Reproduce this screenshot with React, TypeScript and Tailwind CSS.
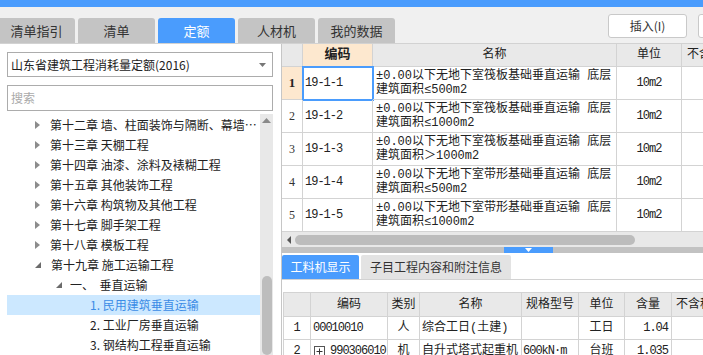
import React from 'react';

const topTabs = ['清单指引', '清单', '定额', '人材机', '我的数据'];

const tree = [
  { level: 0, open: false, text: '第十二章 墙、柱面装饰与隔断、幕墙工程' },
  { level: 0, open: false, text: '第十三章 天棚工程' },
  { level: 0, open: false, text: '第十四章 油漆、涂料及裱糊工程' },
  { level: 0, open: false, text: '第十五章 其他装饰工程' },
  { level: 0, open: false, text: '第十六章 构筑物及其他工程' },
  { level: 0, open: false, text: '第十七章 脚手架工程' },
  { level: 0, open: false, text: '第十八章 模板工程' },
  { level: 0, open: true, text: '第十九章 施工运输工程' },
  { level: 1, open: true, text: '一、  垂直运输' },
  { level: 2, text: '1. 民用建筑垂直运输', selected: true },
  { level: 2, text: '2. 工业厂房垂直运输' },
  { level: 2, text: '3. 钢结构工程垂直运输' },
];

const quotas = [
  { code: '19-1-1', name: ['±0.00以下无地下室筏板基础垂直运输 底层', '建筑面积≤500m2'], unit: '10m2' },
  { code: '19-1-2', name: ['±0.00以下无地下室筏板基础垂直运输 底层', '建筑面积≤1000m2'], unit: '10m2' },
  { code: '19-1-3', name: ['±0.00以下无地下室筏板基础垂直运输 底层', '建筑面积＞1000m2'], unit: '10m2' },
  { code: '19-1-4', name: ['±0.00以下无地下室带形基础垂直运输 底层', '建筑面积≤500m2'], unit: '10m2' },
  { code: '19-1-5', name: ['±0.00以下无地下室带形基础垂直运输 底层', '建筑面积≤1000m2'], unit: '10m2' },
];

// bottom grid column widths (incl. right border)
const resCols = ['w-[27px]', 'w-[77px]', 'w-[32px]', 'w-[102px]', 'w-[57px]', 'w-[46px]', 'w-[47px]', 'w-[80px]'];
const resHead = ['', '编码', '类别', '名称', '规格型号', '单位', '含量', '不含税单价'];

const cell = 'shrink-0 border-r border-b border-[#d3d3d3] flex items-center overflow-hidden whitespace-nowrap';
const grid = "font-['Liberation_Mono','Noto_Sans_CJK_SC',monospace]";
const num = 'tracking-[-1px]';

function TreeArrow({ open }: { open?: boolean }) {
  return open ? (
    <svg width="6" height="6" viewBox="0 0 6 6" className="shrink-0">
      <polygon points="6,0 6,6 0,6" fill="#6b6b6b" />
    </svg>
  ) : (
    <svg width="5" height="8" viewBox="0 0 5 8" className="shrink-0">
      <polygon points="0,0 5,4 0,8" fill="#8c8c8c" />
    </svg>
  );
}

export default function App() {
  return (
    <div className="w-[703px] h-[355px] overflow-hidden bg-[#f0f0f0] flex flex-col text-[12px] text-[#222] font-['Noto_Sans_CJK_SC',sans-serif]">
      <div className="h-[7px] shrink-0 bg-[#4a9cfd]" />

      {/* toolbar + tabs */}
      <div className="h-[37px] shrink-0 flex border-b border-[#d2d2d2]">
        <div className="flex items-end gap-[3px] ml-[-2px]">
          {topTabs.map((t) => (
            <div
              key={t}
              className={`w-[77px] h-[25px] rounded-t-[3px] flex items-center justify-center text-[13px] ${
                t === '定额' ? 'bg-[#4a9cfd] text-white' : 'bg-[#c4c4c4] text-[#333]'
              }`}
            >
              {t}
            </div>
          ))}
        </div>
        <div className="ml-[213px] mt-[7px] flex gap-[11px] shrink-0">
          <button className="w-[79px] h-[24px] shrink-0 bg-white border border-[#c9c9c9] rounded-[3px] text-[12px] text-[#333]">
            插入(I)
          </button>
          <button className="w-[79px] h-[24px] shrink-0 bg-white border border-[#c9c9c9] rounded-[3px] text-[12px] text-[#333]">
            替换(R)
          </button>
        </div>
      </div>

      <div className="flex flex-1 min-h-0">
        {/* left panel */}
        <div className="w-[281px] shrink-0 bg-white flex flex-col pl-[7px] pt-[8px]">
          <div className="w-[266px] h-[25px] border border-[#acacac] flex items-center justify-between pl-[3px] pr-[6px]">
            <span>山东省建筑工程消耗量定额(2016)</span>
            <svg width="7" height="4" viewBox="0 0 7 4">
              <polygon points="0,0 7,0 3.5,4" fill="#777" />
            </svg>
          </div>
          <div className="mt-[8px] w-[266px] h-[26px] border border-[#acacac] flex items-center pl-[3px] text-[#aaa]">
            搜索
          </div>
          <div className="mt-[3px] flex flex-1 min-h-0">
            <div className="w-[253px] pt-[1px]">
              {tree.map((n) => (
                <div
                  key={n.text}
                  className={`h-[20px] flex items-center ${n.selected ? 'bg-[#cce8ff] text-[#3b8ce6]' : 'text-[#222]'}`}
                >
                  {n.level === 0 && (
                    <>
                      <span className="w-[28px] shrink-0" />
                      <TreeArrow open={n.open} />
                      <span className="w-[10px] shrink-0" />
                    </>
                  )}
                  {n.level === 1 && (
                    <>
                      <span className="w-[49px] shrink-0" />
                      <TreeArrow open />
                      <span className="w-[8px] shrink-0" />
                    </>
                  )}
                  {n.level === 2 && <span className="w-[83px] shrink-0" />}
                  <span className="truncate pr-[3px] whitespace-pre">{n.text}</span>
                </div>
              ))}
            </div>
            <div className="w-[13px] bg-[#e8e8e8] flex flex-col items-center">
              <svg width="9" height="5" viewBox="0 0 9 5" className="mt-[4px]">
                <polygon points="0,5 9,5 4.5,0" fill="#8a8a8a" />
              </svg>
              <div className="mt-[153px] w-[10px] flex-1 rounded-full bg-[#bdbdbd]" />
            </div>
          </div>
        </div>

        <div className="w-px shrink-0 bg-[#c6c6c6]" />

        {/* right panel */}
        <div className="w-[421px] shrink-0 flex flex-col bg-white overflow-hidden">
          <div className={`${grid} flex flex-col`}>
            <div className="flex h-[23px] bg-[#e9e9e9]">
              <div className={`${cell} w-[21px]`} />
              <div className={`${cell} w-[70px] justify-center bg-[#fde8cf] font-bold text-[13px]`}>编码</div>
              <div className={`${cell} w-[244px] justify-center`}>名称</div>
              <div className={`${cell} w-[65px] justify-center`}>单位</div>
              <div className={`${cell} w-[90px] pl-[5px]`}>不含税单价</div>
            </div>
            {quotas.map((q, i) => (
              <div key={q.code} className="flex h-[33px]">
                <div
                  className={`${cell} w-[21px] justify-center font-['Liberation_Serif',serif] ${
                    i === 0 ? 'bg-[#fde8cf] font-bold text-[13px]' : 'text-[#333]'
                  }`}
                >
                  {i + 1}
                </div>
                <div
                  className={`${cell} ${num} w-[70px] pl-[2px] ${
                    i === 0 ? 'outline-2 outline-[#4a9cfd] -outline-offset-1' : ''
                  }`}
                >
                  {q.code}
                </div>
                <div className={`${cell} w-[244px] pl-[3px] flex-col items-start justify-center leading-[14px]`}>
                  <span>{q.name[0]}</span>
                  <span>{q.name[1]}</span>
                </div>
                <div className={`${cell} ${num} w-[65px] justify-center`}>{q.unit}</div>
                <div className={`${cell} w-[90px]`} />
              </div>
            ))}
          </div>

          {/* horizontal scrollbar */}
          <div className="h-[15px] shrink-0 bg-[#e8e8e8] flex items-center">
            <svg width="4" height="8" viewBox="0 0 4 8" className="ml-[5px]">
              <polygon points="4,0 4,8 0,4" fill="#555" />
            </svg>
            <div className="ml-[4px] w-[340px] h-[10px] rounded-full bg-[#bcbcbc]" />
          </div>

          {/* splitter */}
          <div className="h-[6px] shrink-0 bg-[#c2c2c2] flex">
            <div className="ml-[222px] w-[49px] h-[6px] bg-[#4a9cfd] flex justify-center">
              <svg width="7" height="4" viewBox="0 0 7 4" className="mt-[1px]">
                <polygon points="0,0 7,0 3.5,4" fill="#fff" />
              </svg>
            </div>
          </div>

          {/* bottom tabs */}
          <div className="h-[27px] shrink-0 pt-[2px] flex gap-[2px] border-b border-[#d2d2d2]">
            <div className="w-[77px] h-[24px] rounded-t-[2px] bg-[#4a9cfd] text-white flex items-center justify-center">
              工料机显示
            </div>
            <div className="w-[150px] h-[24px] rounded-t-[2px] bg-[#e3e3e3] text-[#333] flex items-center justify-center">
              子目工程内容和附注信息
            </div>
          </div>

          <div className="h-[12px] shrink-0" />

          {/* resource grid */}
          <div className={`${grid} ml-px flex flex-col border-l border-t border-[#d3d3d3]`}>
            <div className="flex h-[24px] bg-[#e9e9e9]">
              {resHead.map((h, i) => (
                <div key={i} className={`${cell} ${resCols[i]} ${i === 7 ? 'pl-[4px]' : 'justify-center'}`}>
                  {h}
                </div>
              ))}
            </div>
            <div className="flex h-[23px]">
              <div className={`${cell} ${resCols[0]} justify-center`}>1</div>
              <div className={`${cell} ${num} ${resCols[1]} pl-[2px]`}>00010010</div>
              <div className={`${cell} ${resCols[2]} justify-center`}>人</div>
              <div className={`${cell} ${resCols[3]} pl-[2px]`}>综合工日(土建)</div>
              <div className={`${cell} ${resCols[4]}`} />
              <div className={`${cell} ${resCols[5]} justify-center`}>工日</div>
              <div className={`${cell} ${num} ${resCols[6]} justify-end pr-[3px]`}>1.04</div>
              <div className={`${cell} ${resCols[7]}`} />
            </div>
            <div className="flex h-[23px]">
              <div className={`${cell} ${resCols[0]} justify-center`}>2</div>
              <div className={`${cell} ${num} ${resCols[1]} pl-[3px] gap-[5px]`}>
                <svg width="11" height="11" viewBox="0 0 11 11" className="shrink-0">
                  <rect x="0.5" y="0.5" width="10" height="10" fill="#fff" stroke="#555" />
                  <path d="M2.5 5.5h6M5.5 2.5v6" stroke="#333" />
                </svg>
                990306010
              </div>
              <div className={`${cell} ${resCols[2]} justify-center`}>机</div>
              <div className={`${cell} ${resCols[3]} pl-[2px]`}>自升式塔式起重机</div>
              <div className={`${cell} ${num} ${resCols[4]} pl-[1px]`}>600kN·m</div>
              <div className={`${cell} ${resCols[5]} justify-center`}>台班</div>
              <div className={`${cell} ${num} ${resCols[6]} justify-end pr-[3px]`}>1.035</div>
              <div className={`${cell} ${resCols[7]}`} />
            </div>
          </div>
        </div>
      </div>
    </div>
  );
}
